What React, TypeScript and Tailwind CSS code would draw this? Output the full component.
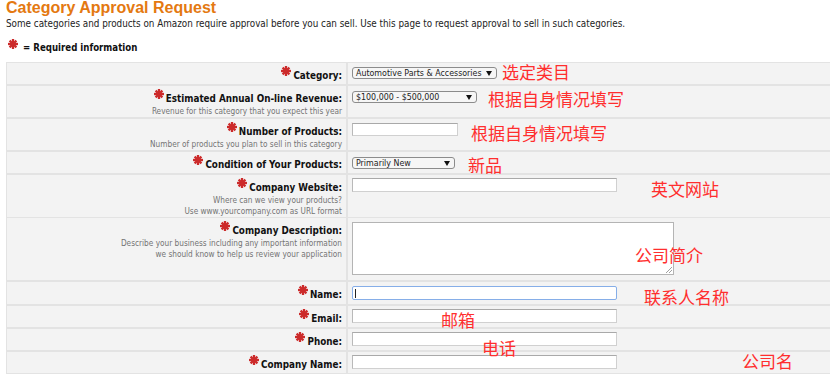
import React from "react";

const Star = ({ className = "" }: { className?: string }) => (
  <svg viewBox="0 0 10 10" className={className} width="10" height="10">
    <g stroke="#cc2b2b" strokeWidth="2.3" strokeLinecap="butt">
      <line x1="5" y1="0" x2="5" y2="10" />
      <line x1="0" y1="5" x2="10" y2="5" />
      <line x1="1.6" y1="1.6" x2="8.4" y2="8.4" />
      <line x1="8.4" y1="1.6" x2="1.6" y2="8.4" />
    </g>
  </svg>
);

const Arrow = () => (
  <svg width="6" height="5" viewBox="0 0 6 5" className="shrink-0">
    <path d="M0 0 L6 0 L3 5 Z" fill="#111" />
  </svg>
);

const Select = ({ w, text }: { w: string; text: string }) => (
  <div
    className={`${w} h-[12px] flex items-center justify-between rounded-[3px] border border-[#8c8c8c] bg-[#f6f6f6] pl-[3px] pr-[4px] text-[8.8px] leading-none text-[#222] whitespace-nowrap`}
  >
    <span>{text}</span>
    <Arrow />
  </div>
);

const Input = ({ w, h }: { w: string; h: string }) => (
  <div className={`${w} ${h} bg-white border border-[#d0d0d0] border-t-[#a9a9a9] border-l-[#b9b9b9]`} />
);

type RowProps = {
  label: string;
  hints?: string[];
  h: string;
  pt: string;
  children: React.ReactNode;
};

const Row = ({ label, hints, h, pt, children }: RowProps) => (
  <div className={`grid grid-cols-[339px_1fr] gap-x-[2px] ${h}`}>
    <div className="bg-[#f3f3f3] pr-[4px] pt-[3px] flex flex-col items-end">
      <div className="flex items-start">
        <Star className="mt-[0px] mr-[2px]" />
        <span className="text-[9.8px] leading-[15px] font-bold text-[#111] pt-[2px]">{label}</span>
      </div>
      {hints &&
        hints.map((t) => (
          <div key={t} className="text-[8.2px] leading-[11px] text-[#737373]">
            {t}
          </div>
        ))}
    </div>
    <div className={`bg-[#f3f3f3] pl-[4px] ${pt}`}>{children}</div>
  </div>
);

const notes: { t: string; c: string }[] = [
  { t: "选定类目", c: "left-[502px] top-[63px]" },
  { t: "根据自身情况填写", c: "left-[488px] top-[90px]" },
  { t: "根据自身情况填写", c: "left-[471px] top-[124px]" },
  { t: "新品", c: "left-[468px] top-[156px]" },
  { t: "英文网站", c: "left-[651px] top-[180px]" },
  { t: "公司简介", c: "left-[635px] top-[246px]" },
  { t: "联系人名称", c: "left-[644px] top-[288px]" },
  { t: "邮箱", c: "left-[441px] top-[311px]" },
  { t: "电话", c: "left-[482px] top-[339px]" },
  { t: "公司名", c: "left-[742px] top-[352px]" },
];

export default function App() {
  return (
    <div
      className="relative w-[830px] h-[376px] overflow-hidden bg-white font-stretch-condensed"
      style={{ fontFamily: '"DejaVu Sans Condensed", "DejaVu Sans", Verdana, sans-serif' }}
    >
      <div className="pl-[6px]">
        <h1
          className="text-[16px] leading-[16px] font-bold text-[#e47911] font-stretch-normal"
          style={{ fontFamily: '"Liberation Sans", Arial, sans-serif' }}
        >
          Category Approval Request
        </h1>
        <p className="mt-[2px] text-[9.8px] leading-[12px] text-[#222]">
          Some categories and products on Amazon require approval before you can sell. Use this page to request approval to sell in such categories.
        </p>
        <div className="mt-[9px] flex items-start h-[14px] pl-[2px]">
          <Star />
          <span className="ml-[5px] mt-[3px] text-[9.6px] leading-[12px] font-bold text-[#111]">= Required information</span>
        </div>
      </div>

      <div className="ml-[6px] mt-[9px] bg-[#e3e3e3] p-[1px] pr-0 flex flex-col gap-y-[2px]">
        <Row label="Category:" h="h-[21px]" pt="pt-[4px]">
          <Select w="w-[145px]" text="Automotive Parts & Accessories" />
        </Row>
        <Row label="Estimated Annual On-line Revenue:" hints={["Revenue for this category that you expect this year"]} h="h-[31px]" pt="pt-[5px]">
          <Select w="w-[125px]" text="$100,000 - $500,000" />
        </Row>
        <Row label="Number of Products:" hints={["Number of products you plan to sell in this category"]} h="h-[31px]" pt="pt-[4px]">
          <Input w="w-[106px]" h="h-[13px]" />
        </Row>
        <Row label="Condition of Your Products:" h="h-[21px]" pt="pt-[5px]">
          <Select w="w-[103px]" text="Primarily New" />
        </Row>
        <Row
          label="Company Website:"
          hints={["Where can we view your products?", "Use www.yourcompany.com as URL format"]}
          h="h-[41px]"
          pt="pt-[3px]"
        >
          <Input w="w-[265px]" h="h-[14px]" />
        </Row>
        <Row
          label="Company Description:"
          hints={["Describe your business including any important information", "we should know to help us review your application"]}
          h="h-[62px]"
          pt="pt-[4px]"
        >
          <div className="relative w-[322px] h-[53px] bg-white border border-[#b4b4b4]">
            <svg className="absolute right-[1px] bottom-[1px]" width="7" height="7" viewBox="0 0 7 7">
              <path d="M7 1 L1 7 M7 4 L4 7" stroke="#a0a0a0" strokeWidth="1" />
            </svg>
          </div>
        </Row>
        <Row label="Name:" h="h-[22px]" pt="pt-[4px]">
          <div className="w-[265px] h-[14px] bg-white border border-[#86aee8] rounded-[2px] flex items-center pl-[2px]">
            <span className="w-[1px] h-[9px] bg-[#222]" />
          </div>
        </Row>
        <Row label="Email:" h="h-[21px]" pt="pt-[3px]">
          <Input w="w-[265px]" h="h-[14px]" />
        </Row>
        <Row label="Phone:" h="h-[21px]" pt="pt-[3px]">
          <Input w="w-[265px]" h="h-[14px]" />
        </Row>
        <Row label="Company Name:" h="h-[21px]" pt="pt-[3px]">
          <Input w="w-[265px]" h="h-[14px]" />
        </Row>
      </div>

      {notes.map((n, i) => (
        <div
          key={i}
          className={`absolute ${n.c} text-[17px] leading-[17px] text-[#ff2e2e] whitespace-nowrap font-stretch-normal`}
          style={{ fontFamily: '"Noto Sans CJK SC", sans-serif' }}
        >
          {n.t}
        </div>
      ))}
    </div>
  );
}
